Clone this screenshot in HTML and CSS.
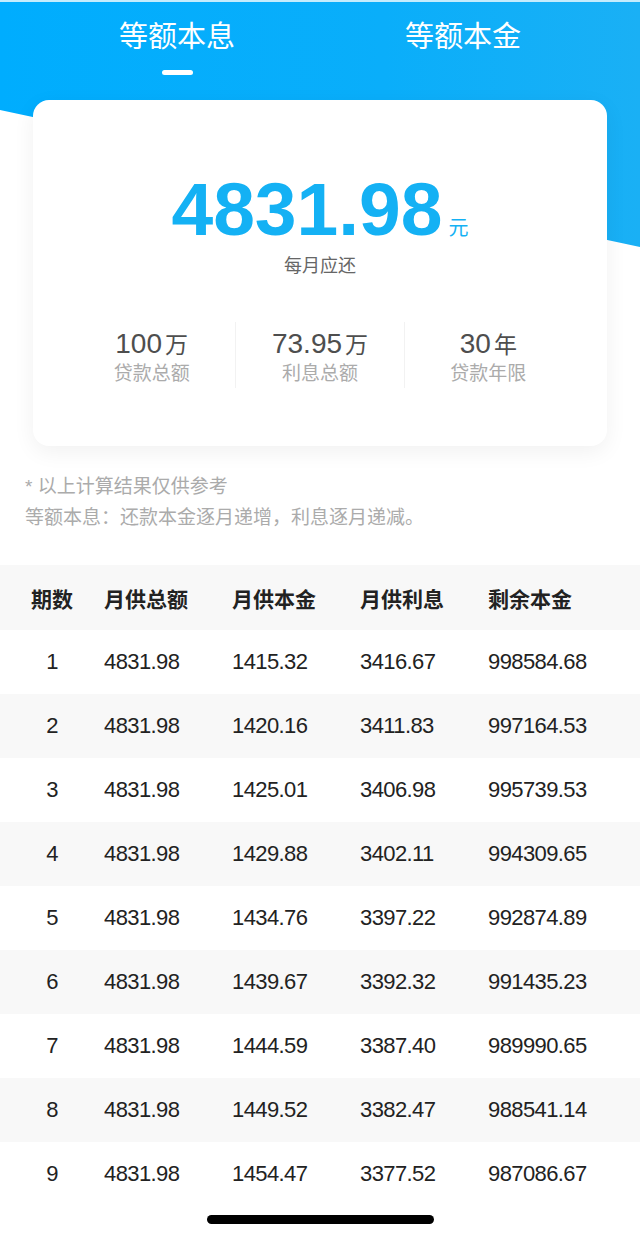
FILE: index.html
```html
<!DOCTYPE html>
<html>
<head>
  <meta charset="utf-8">
  <title>房贷计算结果</title>
  <link rel="stylesheet" href="styles.css">
</head>
<body>

<div class="hero">
  <div class="tabs">
    <div class="tab active">
      <span>等额本息</span>
      <span class="tab-bar"></span>
    </div>
    <div class="tab">
      <span>等额本金</span>
    </div>
  </div>

  <div class="card">
    <div class="amount">
      <span class="amount-num">4831.98</span><span class="amount-unit">元</span>
    </div>
    <div class="amount-label">每月应还</div>

    <div class="stats">
      <div class="stat">
        <div class="stat-val">100<span class="stat-unit">万</span></div>
        <div class="stat-label">贷款总额</div>
      </div>
      <div class="stat">
        <div class="stat-val">73.95<span class="stat-unit">万</span></div>
        <div class="stat-label">利息总额</div>
      </div>
      <div class="stat">
        <div class="stat-val">30<span class="stat-unit">年</span></div>
        <div class="stat-label">贷款年限</div>
      </div>
    </div>
  </div>
</div>

<div class="notes">
  <p>* 以上计算结果仅供参考</p>
  <p>等额本息：还款本金逐月递增，利息逐月递减。</p>
</div>

<div class="table">
  <div class="row head">
    <span>期数</span><span>月供总额</span><span>月供本金</span><span>月供利息</span><span>剩余本金</span>
  </div>
  <div class="row"><span>1</span><span>4831.98</span><span>1415.32</span><span>3416.67</span><span>998584.68</span></div>
  <div class="row"><span>2</span><span>4831.98</span><span>1420.16</span><span>3411.83</span><span>997164.53</span></div>
  <div class="row"><span>3</span><span>4831.98</span><span>1425.01</span><span>3406.98</span><span>995739.53</span></div>
  <div class="row"><span>4</span><span>4831.98</span><span>1429.88</span><span>3402.11</span><span>994309.65</span></div>
  <div class="row"><span>5</span><span>4831.98</span><span>1434.76</span><span>3397.22</span><span>992874.89</span></div>
  <div class="row"><span>6</span><span>4831.98</span><span>1439.67</span><span>3392.32</span><span>991435.23</span></div>
  <div class="row"><span>7</span><span>4831.98</span><span>1444.59</span><span>3387.40</span><span>989990.65</span></div>
  <div class="row"><span>8</span><span>4831.98</span><span>1449.52</span><span>3382.47</span><span>988541.14</span></div>
  <div class="row"><span>9</span><span>4831.98</span><span>1454.47</span><span>3377.52</span><span>987086.67</span></div>
</div>

<div class="home-indicator"></div>

</body>
</html>
```

FILE: styles.css
```css
body {
  margin: 0;
  background-color: #fff;
  font-family: "Liberation Sans", "Noto Sans CJK SC", sans-serif;
  color: #222;
}

.hero {
  position: relative;
  border-top: 2px solid #c4ecfd;
}

/* slanted blue background behind tabs and card */
.hero::before {
  content: "";
  position: absolute;
  top: 0;
  left: 0;
  right: 0;
  height: 250px;
  background: linear-gradient(90deg, #00adfe 0%, #0aaefa 60%, #1ab0f5 100%);
  clip-path: polygon(0 0, 100% 0, 100% 245px, 0 108px);
}

.tabs {
  position: relative;
  display: flex;
  align-items: flex-start;
  padding: 21px 34px 0;
}

.tab {
  flex: 1;
  display: flex;
  flex-direction: column;
  align-items: center;
  font-size: 29px;
  line-height: 29px;
  color: #fff;
}

.tab-bar {
  width: 31px;
  height: 5px;
  margin-top: 18px;
  border-radius: 3px;
  background-color: #fff;
}

.card {
  position: relative;
  margin: 25px 33px 0;
  padding: 72px 35px 58px;
  background-color: #fff;
  border-radius: 16px;
  box-shadow: 0 6px 22px rgba(0, 0, 0, 0.06);
  text-align: center;
}

.amount {
  font-size: 75px;
  line-height: 75px;
  color: #14b1f4;
}

.amount-num {
  font-weight: bold;
}

.amount-unit {
  font-size: 20px;
  line-height: 1;
  margin-left: 6px;
}

.amount-label {
  margin-top: 10px;
  font-size: 18px;
  line-height: 18px;
  color: #666;
}

.stats {
  display: flex;
  margin-top: 47px;
}

.stat {
  flex: 1;
  padding: 8px 0 5px;
}

.stat + .stat {
  border-left: 1px solid #f2f2f2;
}

.stat-val {
  font-size: 28px;
  line-height: 28px;
  color: #4e4e4e;
}

.stat-unit {
  font-size: 23px;
  line-height: 1;
  margin-left: 3px;
}

.stat-label {
  margin-top: 6px;
  font-size: 19px;
  line-height: 19px;
  color: #ababab;
}

.notes {
  margin-top: 25px;
  padding: 0 25px;
  font-size: 19px;
  line-height: 31px;
  color: #ababab;
}

.notes p {
  margin: 0;
}

.table {
  margin-top: 32px;
}

.row {
  display: grid;
  grid-template-columns: 104px 128px 128px 128px 1fr;
  align-items: center;
  height: 64px;
  font-size: 22px;
  letter-spacing: -0.6px;
  color: #222;
}

.row:nth-child(odd) {
  background-color: #f8f8f8;
}

.row span:first-child {
  text-align: center;
}

.row.head {
  height: 65px;
  font-size: 21px;
  font-weight: bold;
  letter-spacing: 0;
}

.home-indicator {
  position: fixed;
  left: 207px;
  bottom: 13px;
  width: 227px;
  height: 9px;
  border-radius: 5px;
  background-color: #000;
}
```
